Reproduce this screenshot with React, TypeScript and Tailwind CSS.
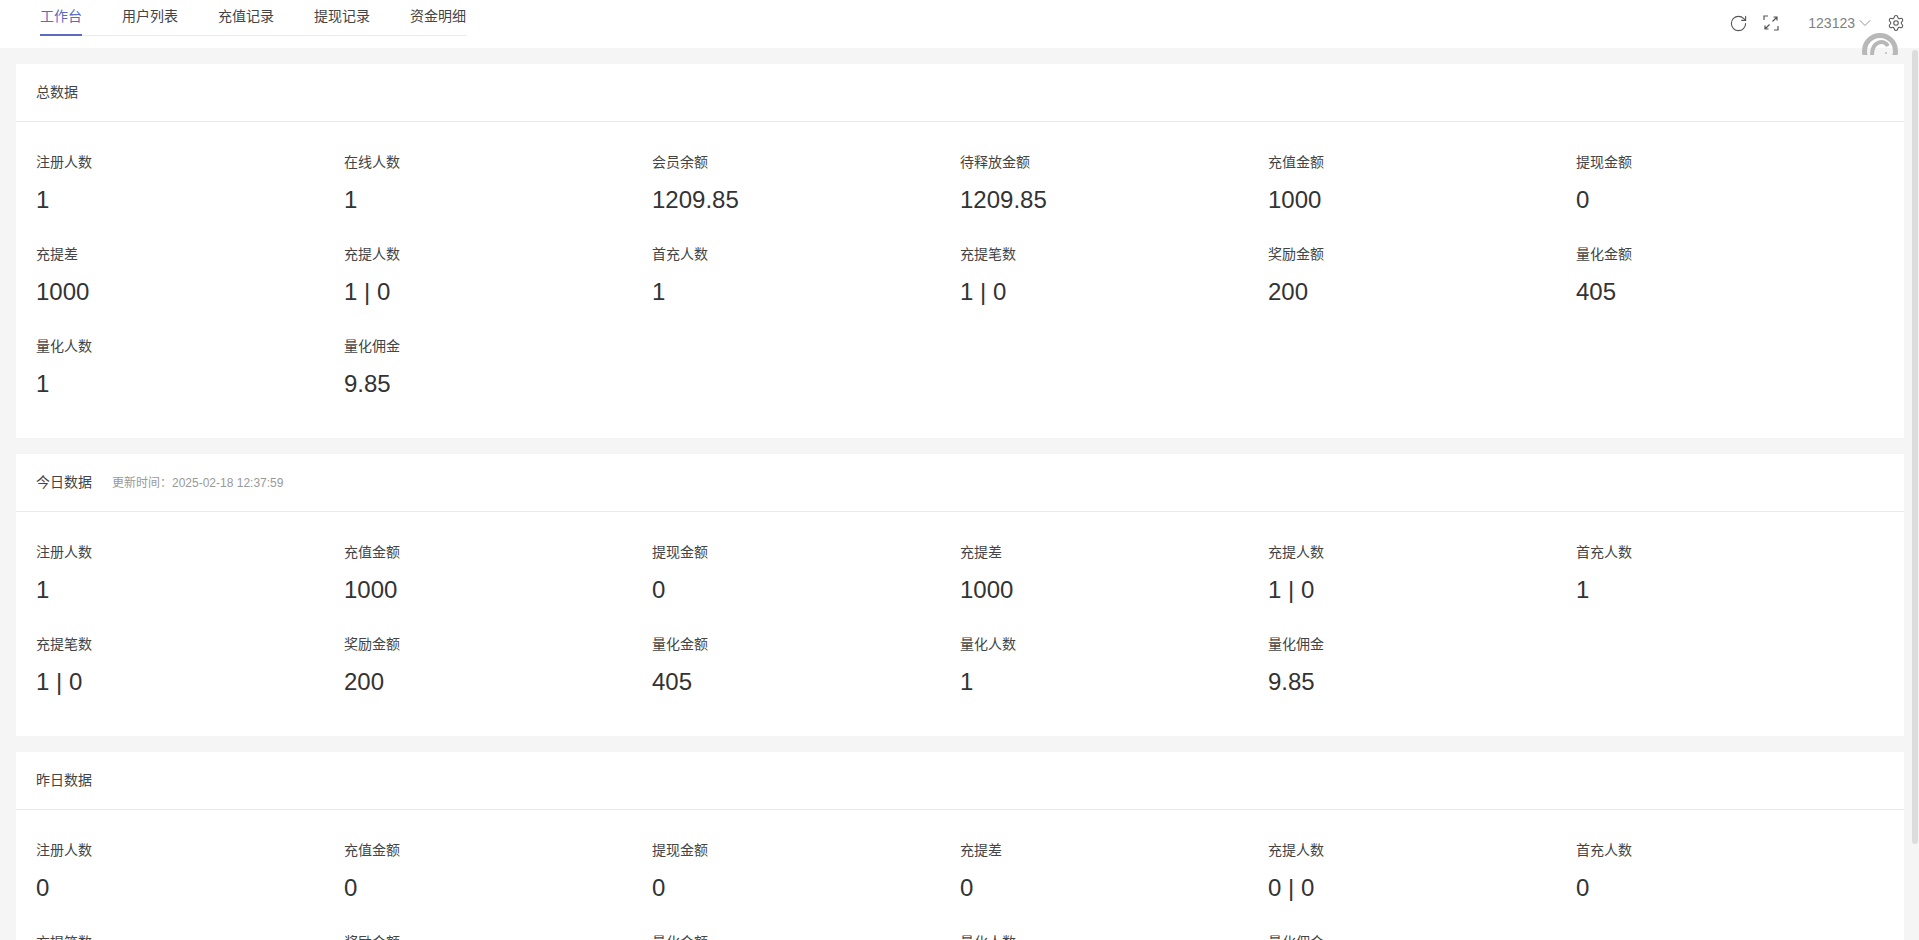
import React from "react";
import { RotateCw, ChevronDown, Settings } from "lucide-react";

const font = "font-['Liberation_Sans','Noto_Sans_CJK_SC',sans-serif]";

type Item = [string, string];

const total: Item[] = [
  ["注册人数", "1"], ["在线人数", "1"], ["会员余额", "1209.85"], ["待释放金额", "1209.85"], ["充值金额", "1000"], ["提现金额", "0"],
  ["充提差", "1000"], ["充提人数", "1 | 0"], ["首充人数", "1"], ["充提笔数", "1 | 0"], ["奖励金额", "200"], ["量化金额", "405"],
  ["量化人数", "1"], ["量化佣金", "9.85"],
];
const today: Item[] = [
  ["注册人数", "1"], ["充值金额", "1000"], ["提现金额", "0"], ["充提差", "1000"], ["充提人数", "1 | 0"], ["首充人数", "1"],
  ["充提笔数", "1 | 0"], ["奖励金额", "200"], ["量化金额", "405"], ["量化人数", "1"], ["量化佣金", "9.85"],
];
const yesterday: Item[] = [
  ["注册人数", "0"], ["充值金额", "0"], ["提现金额", "0"], ["充提差", "0"], ["充提人数", "0 | 0"], ["首充人数", "0"],
  ["充提笔数", "0 | 0"], ["奖励金额", "0"], ["量化金额", "0"], ["量化人数", "0"], ["量化佣金", "0"],
];

function Card({ title, sub, items }: { title: string; sub?: string; items: Item[] }) {
  return (
    <section className="bg-white">
      <header className="h-[58px] flex items-center px-5 border-b border-[#e8eaec]">
        <span className="text-[14px] text-[#444]">{title}</span>
        {sub && <span className="ml-5 text-[12px] text-[#999]">{sub}</span>}
      </header>
      <div className="grid grid-cols-6 px-5 py-5">
        {items.map(([label, value], i) => (
          <div key={i} className="h-[92px] pt-[9px]">
            <div className="text-[14px] leading-[22px] text-[#444]">{label}</div>
            <div className="mt-[13px] text-[24px] leading-[28px] text-[#333]">{value}</div>
          </div>
        ))}
      </div>
    </section>
  );
}

export default function App() {
  const tabs = ["工作台", "用户列表", "充值记录", "提现记录", "资金明细"];
  return (
    <div className={`${font} relative h-[940px] overflow-hidden bg-[#f5f5f5]`}>
      <div className="relative z-10 h-12 bg-white flex items-start justify-between pl-10 pr-[14px]">
        <nav className="flex gap-10 h-9 border-b border-[#e8eaec]">
          {tabs.map((t, i) => (
            <div
              key={t}
              className={`h-9 pt-[5px] text-[14px] leading-[22px] ${
                i === 0 ? "text-[#5c6bc0] border-b-2 border-[#5c6bc0]" : "text-[#444]"
              }`}
            >
              {t}
            </div>
          ))}
        </nav>
        <div className="flex items-center h-[46px] text-[#555]">
          <RotateCw size={19} strokeWidth={1.4} />
          <svg width="16" height="16" viewBox="0 0 16 16" fill="none" stroke="currentColor" strokeWidth="1.2" className="ml-[15px]">
            <path d="M1 5V1h4M11 15h4v-4M9.5 6.5 14 2M10.5 2H14v3.5M6.5 9.5 2 14M2 10.5V14h3.5" />
          </svg>
          <span className="ml-[29px] text-[14px] text-[#808080]">123123</span>
          <ChevronDown size={20} strokeWidth={1} className="text-[#808080]" />
          <Settings size={18} strokeWidth={1.4} className="ml-[12px]" />
        </div>
      </div>
      <svg width="40" height="24" viewBox="0 0 40 24" fill="none" className="absolute z-10 left-[1860px] top-[31px]">
        <circle cx="20" cy="20" r="15.5" stroke="#b8b8b8" strokeWidth="5" />
        <path d="M12 24C12 10 24 8 28 15" stroke="#b8b8b8" strokeWidth="4" />
        <circle cx="26" cy="22" r="1" fill="#b8b8b8" />
      </svg>
      <div className="flex flex-col gap-4 pt-4 pl-4 pr-[15px]">
        <Card title="总数据" items={total} />
        <Card title="今日数据" sub="更新时间：2025-02-18 12:37:59" items={today} />
        <Card title="昨日数据" items={yesterday} />
      </div>
      <div className="absolute right-[1px] top-[50px] w-[6px] h-[794px] rounded-[3px] bg-[#dcdcdc]" />
    </div>
  );
}
